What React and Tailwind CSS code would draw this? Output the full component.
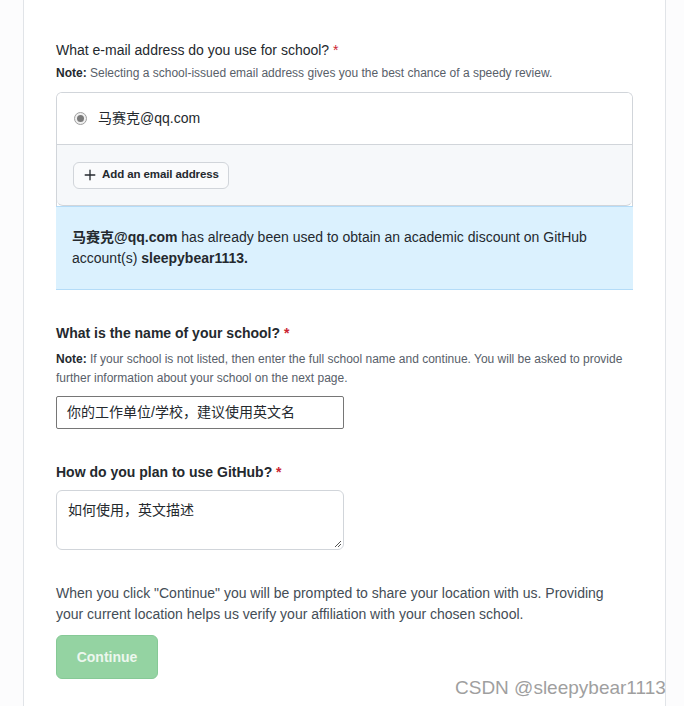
import React from 'react';

const font = { fontFamily: '"Segoe UI", "Liberation Sans", "Noto Sans CJK SC", sans-serif' };

const Required = () => <span className="text-[#cb2431]"> *</span>;

const App = () => {
  return (
    <div className="relative min-h-[706px] w-[684px] bg-[#fcfcfd] text-[#24292e]" style={font}>
      <div className="ml-[23px] mr-[18px] min-h-[706px] border-x border-[#e1e4e8] bg-white px-[32px] pt-[40px]">
        <div className="text-[14px] leading-[21px]">What e-mail address do you use for school?<Required /></div>
        <p className="mt-[3px] text-[12px] leading-[18px] text-[#586069]">
          <b className="text-[#24292e]">Note:</b> Selecting a school-issued email address gives you the best chance of a speedy review.
        </p>

        <div className="mt-[10px] overflow-hidden rounded-t-[6px] border border-b-0 border-[#d1d5da]">
          <label className="flex h-[52px] items-center gap-[11px] border-b border-[#d1d5da] bg-white px-[17px]">
            <span className="flex h-[13px] w-[13px] items-center justify-center rounded-full border border-[#a0a0a0] bg-[#f0f0f0]">
              <span className="h-[7px] w-[7px] rounded-full bg-[#7a7a7a]" />
            </span>
            <span className="text-[14px]">马赛克@qq.com</span>
          </label>
          <div className="flex h-[61px] items-center rounded-b-[6px] border-b border-[#d1d5da] bg-[#f6f8fa] px-[16px]">
            <button className="flex h-[27px] items-center gap-[5px] rounded-[6px] border border-[#d1d5da] bg-[#fafbfc] px-[9px] text-[11.5px] font-semibold tracking-[-0.1px]">
              <svg width="14" height="14" viewBox="0 0 16 16" fill="#24292e">
                <path d="M7.25 2.5a.75.75 0 0 1 1.5 0v4.75h4.75a.75.75 0 0 1 0 1.5H8.75v4.75a.75.75 0 0 1-1.5 0V8.75H2.5a.75.75 0 0 1 0-1.5h4.75z" />
              </svg>
              Add an email address
            </button>
          </div>
        </div>

        <div className="border-y border-[#b4dcf8] bg-[#dbf1fe] px-[16px] pb-[20px] pt-[20px] text-[14px] leading-[21px]">
          <b>马赛克@qq.com</b> has already been used to obtain an academic discount on GitHub account(s) <b>sleepybear1113.</b>
        </div>

        <div className="mt-[33px] text-[14px] font-semibold leading-[21px]">What is the name of your school?<Required /></div>
        <p className="mt-[6px] text-[12px] leading-[19px] text-[#586069]">
          <b className="text-[#24292e]">Note:</b> If your school is not listed, then enter the full school name and continue. You will be asked to provide further information about your school on the next page.
        </p>
        <div className="mt-[8px] flex h-[33px] w-[288px] items-center rounded-[2px] border border-[#767676] px-[10px] text-[14px]">
          你的工作单位/学校，建议使用英文名
        </div>

        <div className="mt-[33px] text-[14px] font-semibold leading-[21px]">How do you plan to use GitHub?<Required /></div>
        <div className="relative mt-[7px] h-[60px] w-[288px] rounded-[6px] border border-[#d1d5da] px-[11px] pt-[9px] text-[14px]">
          如何使用，英文描述
          <svg className="absolute bottom-[1px] right-[1px]" width="8" height="8" viewBox="0 0 8 8" stroke="#555" strokeWidth="1">
            <path d="M7 1L1 7M7 4L4 7" />
          </svg>
        </div>

        <p className="mt-[33px] text-[14px] leading-[21px] text-[#444d56]">
          When you click "Continue" you will be prompted to share your location with us. Providing your current location helps us verify your affiliation with your chosen school.
        </p>
        <button className="mt-[10px] h-[44px] w-[102px] rounded-[6px] border border-[#86c996] bg-[#94d3a2] text-[14px] font-semibold text-[#ecf7ee]">
          Continue
        </button>
      </div>
      <div className="pointer-events-none absolute left-[455px] top-[674px] text-[19px] text-[#9f9f9f]" style={{ fontFamily: '"Liberation Sans", sans-serif' }}>
        CSDN @sleepybear1113
      </div>
    </div>
  );
};

export default App;
